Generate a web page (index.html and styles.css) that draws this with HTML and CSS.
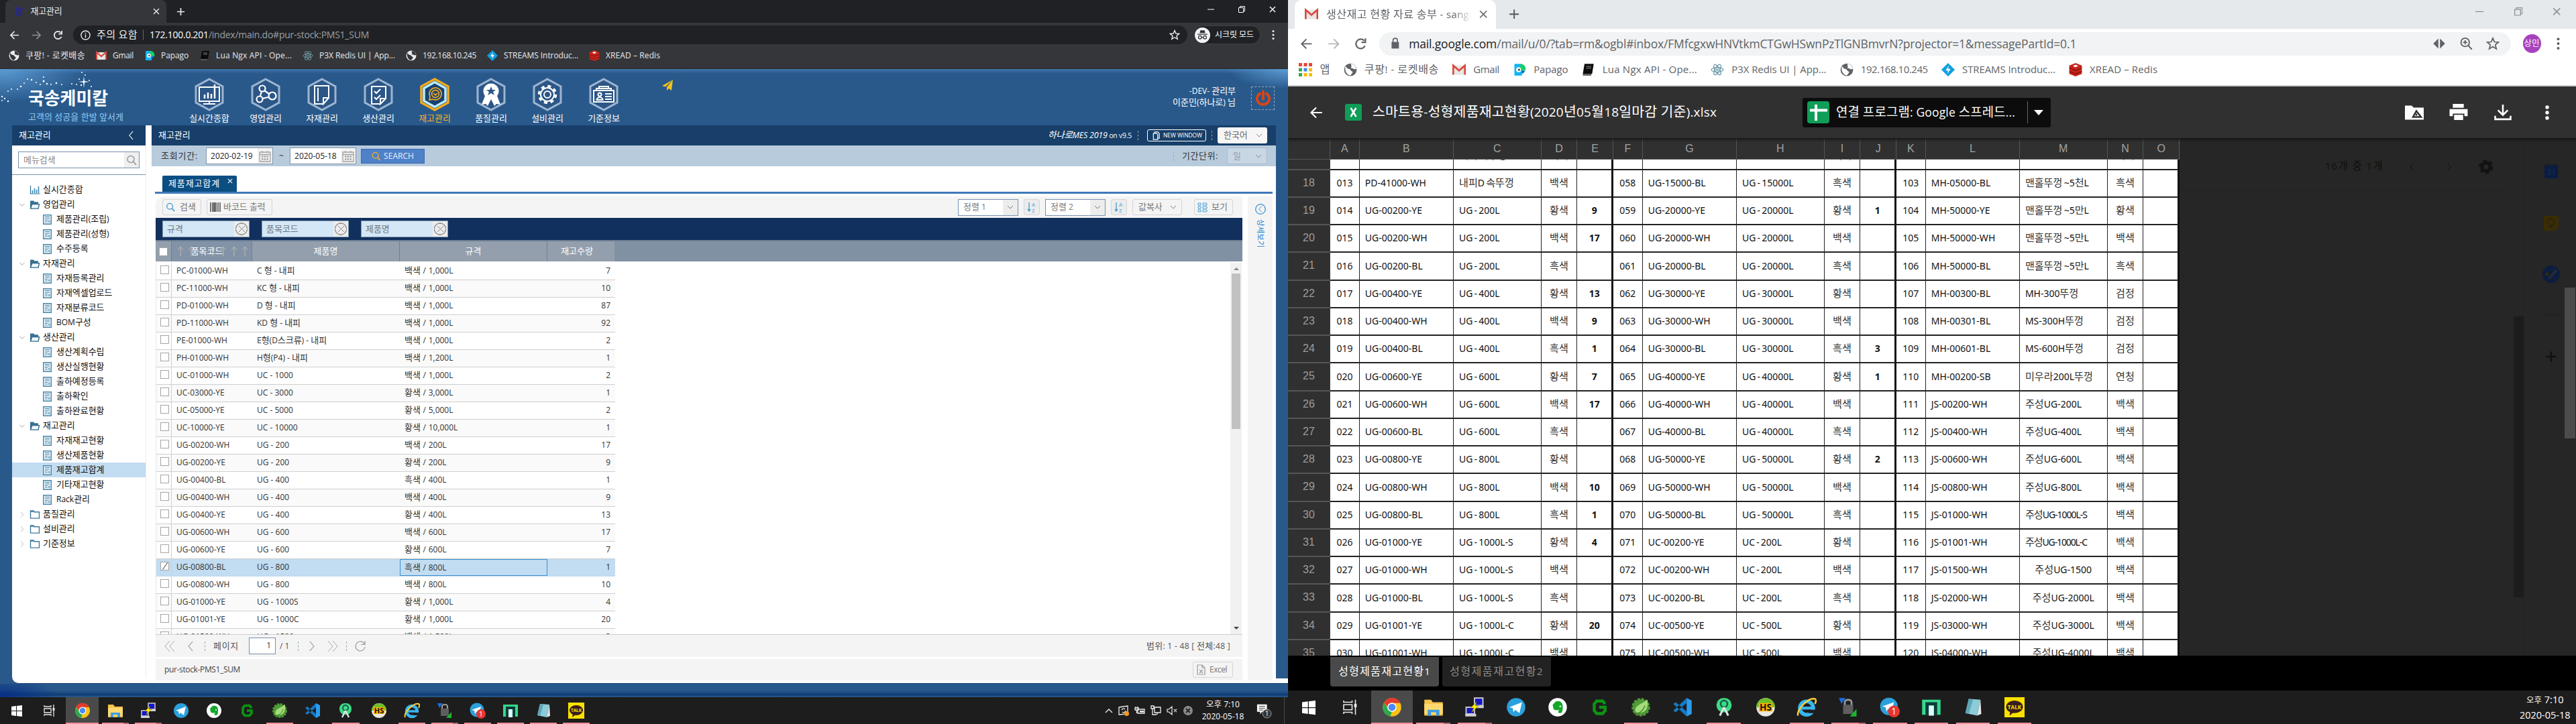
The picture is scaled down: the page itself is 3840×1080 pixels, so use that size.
FILE: index.html
```html
<!DOCTYPE html>
<html lang="ko">
<head>
<meta charset="utf-8">
<title>재고관리</title>
<link rel="stylesheet" href="styles.css">
</head>
<body>
<svg class="sprite" xmlns="http://www.w3.org/2000/svg">
  <defs>
    <symbol id="globe" viewBox="0 0 16 16"><circle cx="8" cy="8" r="7.5" fill="currentColor"/><path d="M2 4c2 1 2 3 4 3s2 2 4 3-1 3-2 5C4 14 1 10 2 4zM9 1c-1 2 1 2 0 4s2 1 3 2 2 0 3 0C15 4 12 1 9 1z" fill="var(--cut)"/></symbol>
    <symbol id="gmail" viewBox="0 0 16 16"><path d="M1 3h14v11H1z" fill="#e8e6e6"/><path d="M1 14V3l7 6 7-6v11" fill="none" stroke="#d84a3e" stroke-width="2.2"/></symbol>
    <symbol id="papago" viewBox="0 0 16 16"><path d="M2 1h7a6 6 0 0 1 2 11v3H2z" fill="#11b5f5"/><path d="M9 1a6 6 0 0 1 6 8H9z" fill="#19ce60"/><circle cx="7" cy="8" r="3" fill="#fff"/><circle cx="7.500" cy="8" r="1.200" fill="#234"/><path d="M11 9l4 1-4 3z" fill="#0b5fb8"/></symbol>
    <symbol id="book" viewBox="0 0 16 16"><path d="M4 1h11l-2 12H2z" fill="#0b0b0b"/><path d="M2 13h10v2H2z" fill="#555"/><path d="M6 4h6M6 6h6" stroke="#777"/></symbol>
    <symbol id="atom" viewBox="0 0 16 16" fill="none" stroke="#6a96a3"><ellipse cx="8" cy="8" rx="7" ry="2.800"/><ellipse cx="8" cy="8" rx="7" ry="2.800" transform="rotate(60 8 8)"/><ellipse cx="8" cy="8" rx="7" ry="2.800" transform="rotate(120 8 8)"/><circle cx="8" cy="8" r="1"/></symbol>
    <symbol id="streams" viewBox="0 0 16 16"><path d="M8 0l8 8-8 8-8-8z" fill="#0f9fe0"/><path d="M9 3L5 9h3l-1 4 4-6H8z" fill="#fff"/></symbol>
    <symbol id="redis" viewBox="0 0 16 16"><path d="M8 0l7.500 3v10L8 16 .5 13V3z" fill="#c6241c"/><path d="M.5 6L8 9l7.500-3M.5 10L8 13l7.500-3" stroke="#7f120d" fill="none"/><path d="M5 3l4-1 2 2-4 1z" fill="#fff"/></symbol>
    <symbol id="apps" viewBox="0 0 16 16"><g fill="#e94335"><path d="M0 0h4v4H0zM6 0h4v4H6zM12 0h4v4h-4z"/></g><path d="M0 6h4v4H0z" fill="#34a853"/><path d="M6 6h4v4H6z" fill="#4285f4"/><path d="M12 6h4v4h-4zM12 12h4v4h-4zM6 12h4v4H6z" fill="#fbbc05"/><path d="M0 12h4v4H0z" fill="#34a853"/></symbol>
    <symbol id="star" viewBox="0 0 16 16"><path d="M8 1.500l1.900 4.500 4.800.4-3.700 3.100 1.200 4.800L8 11.700l-4.200 2.600L5 9.500 1.300 6.400 6.100 6z" fill="none" stroke="currentColor" stroke-width="1.400"/></symbol>
    <symbol id="back" viewBox="0 0 16 16"><path d="M15 8H2M8 2L2 8l6 6" fill="none" stroke="currentColor" stroke-width="1.700"/></symbol>
    <symbol id="fwd" viewBox="0 0 16 16"><path d="M1 8h13M8 2l6 6-6 6" fill="none" stroke="currentColor" stroke-width="1.700"/></symbol>
    <symbol id="reload" viewBox="0 0 16 16"><path d="M13.500 10.500A6 6 0 1 1 12.500 4M14 1v5H9" fill="none" stroke="currentColor" stroke-width="1.900"/></symbol>
    <symbol id="dots" viewBox="0 0 4 16"><g fill="currentColor"><circle cx="2" cy="2.500" r="1.600"/><circle cx="2" cy="8" r="1.600"/><circle cx="2" cy="13.500" r="1.600"/></g></symbol>
    <symbol id="plus" viewBox="0 0 14 14"><path d="M7 1v12M1 7h12" stroke="currentColor" stroke-width="1.800"/></symbol>
    <symbol id="cross" viewBox="0 0 10 10"><path d="M1 1l8 8M9 1L1 9" stroke="currentColor" stroke-width="1.400"/></symbol>
    <symbol id="min" viewBox="0 0 10 10"><path d="M0 5h10" stroke="currentColor"/></symbol>
    <symbol id="restore" viewBox="0 0 10 10"><path d="M.5 2.500h7v7h-7zM2.500 2.500v-2h7v7h-2" fill="none" stroke="currentColor"/></symbol>
    <symbol id="chev-d" viewBox="0 0 10 10"><path d="M1 3l4 4 4-4" fill="none" stroke="currentColor"/></symbol>
    <symbol id="chev-r" viewBox="0 0 10 16"><path d="M2 1l6 7-6 7" fill="none" stroke="currentColor" stroke-width="1.200"/></symbol>
    <symbol id="chev-l" viewBox="0 0 10 16"><path d="M8 1L2 8l6 7" fill="none" stroke="currentColor" stroke-width="1.200"/></symbol>
    <symbol id="lens" viewBox="0 0 16 16"><circle cx="7" cy="6.500" r="5" fill="none" stroke="currentColor" stroke-width="1.500"/><path d="M10.500 10l4.500 5" stroke="currentColor" stroke-width="1.800"/></symbol>
    <symbol id="cal" viewBox="0 0 18 18"><path d="M1 3h16v14H1zM1 6.500h16M5 1v3M13 1v3" fill="none" stroke="#a3a3a3" stroke-width="1.300"/><path d="M4 9.500h10M4 13.500h10" stroke="#a3a3a3" stroke-width="2.500" stroke-dasharray="2.500 1.200"/></symbol>
    <symbol id="az" viewBox="0 0 16 18"><path d="M4 2v13M2 12l2 3 2-3" stroke="#4a9fd6" fill="none" stroke-width="1.400"/><text x="8" y="8" font-size="8" fill="#4a9fd6">A</text><text x="8" y="17" font-size="8" fill="#4a9fd6">Z</text></symbol>
    <symbol id="doc" viewBox="0 0 13 15"><path d="M.7.7h11.600v13.600H.7z" fill="#eaf4fa" stroke="#4a86a8" stroke-width="1.400"/><path d="M3 3.500h7M3 6h7M3 8.500h4M3 11h4" stroke="#4a86a8"/><path d="M8 8.500h2.500V12H8z" fill="#7fb0ca"/></symbol>
    <symbol id="folder-o" viewBox="0 0 16 14"><path d="M1 12V1h5l1 2h6v3" fill="#3c7393" stroke="#2f6a8c"/><path d="M3.500 6H15l-1.500 7H1z" fill="#eef7fc" stroke="#2f6a8c" stroke-width="1.500"/></symbol>
    <symbol id="folder" viewBox="0 0 16 14"><path d="M1 13V1h5l1 2h8v10z" fill="#fff" stroke="#3c7ba0" stroke-width="1.500"/><path d="M1 1h5l1 2H1z" fill="#3c7ba0"/></symbol>
    <symbol id="chart" viewBox="0 0 15 13"><path d="M1 0v12h14" fill="none" stroke="#2e6c90" stroke-width="1.200"/><path d="M4 11V7M7 11V4M10 11V6M13 11V1" stroke="#3a8bb8" stroke-width="1.600"/></symbol>
    <symbol id="hex" viewBox="0 0 46 50"><path d="M23 2l20 11v24L23 48 3 37V13z" fill="#2b5687" stroke="#9db5d0" stroke-width="3"/></symbol>
    <symbol id="hex-on" viewBox="0 0 46 50"><path d="M23 2l20 11v24L23 48 3 37V13z" fill="#17426f" stroke="#f5ab1c" stroke-width="3.500"/><path d="M23 6.500l16 9v19l-16 9-16-9v-19z" fill="none" stroke="#b9ecff" stroke-width="3.500"/></symbol>

    <symbol id="t-win" viewBox="0 0 24 24"><path d="M4 6l7-1v7H4zM12 5l8-1v8h-8zM4 13h7v7l-7-1zM12 13h8v8l-8-1z" fill="#fff"/></symbol>
    <symbol id="t-view" viewBox="0 0 24 24"><path d="M4 9h10v6H4zM4 4v2h10V4M4 20v-2h10v2M18 3v18" fill="none" stroke="#e8e8e8" stroke-width="1.300"/><path d="M16.500 8h3v4h-3z" fill="#e8e8e8"/></symbol>
    <symbol id="t-chrome" viewBox="0 0 24 24"><circle cx="12" cy="12" r="11" fill="#fbc116"/><path d="M2.500 6.500A11 11 0 0 1 22 7H12z" fill="#e33b2e"/><path d="M2.500 6.500L7.500 14 12 17l-2 6A11 11 0 0 1 2.500 6.500z" fill="#2da94f"/><path d="M2.500 6.500A11 11 0 0 1 12 1v6a5 5 0 0 0-5 5z" fill="#e33b2e"/><circle cx="12" cy="12" r="5.500" fill="#fff"/><circle cx="12" cy="12" r="4.300" fill="#4a8af4"/></symbol>
    <symbol id="t-explorer" viewBox="0 0 24 24"><path d="M1 3h8l2 3h12v16H1z" fill="#f5c24b"/><path d="M1 8h22v12H1z" fill="#ffd970"/><path d="M5 22v-7h14v7h-4v-4H9v4z" fill="#3f9de0"/></symbol>
    <symbol id="t-putty" viewBox="0 0 24 24"><path d="M12 1h10v9H12zM2 12h10v8H2z" fill="#1414c8" stroke="#ccc" stroke-width="1.500"/><path d="M10 10h13v3H11zM1 20h13v3H1z" fill="#d0d0d0"/><path d="M15 5l-8 8h4l-3 6 9-9h-4z" fill="#ffef00" stroke="#333" stroke-width=".4"/></symbol>
    <symbol id="t-tele" viewBox="0 0 24 24"><circle cx="12" cy="12" r="11" fill="#2ba0dc"/><path d="M4 12l15-6-3 13-5-4-2 3-1-5z" fill="#fff"/></symbol>
    <symbol id="t-ever" viewBox="0 0 24 24"><circle cx="12" cy="12" r="11" fill="#fff"/><path d="M6 9l4-4c5-1 8 1 8 6 0 4 0 8-3 8-4 0-2-3-1-4-3 1-5 1-7-1z" fill="#13a82b"/><circle cx="15" cy="11" r="1" fill="#fff"/></symbol>
    <symbol id="t-g" viewBox="0 0 24 24"><path d="M19 8l-3-3.500H9L6 8v8l3 3.500h7l3-3.500v-4h-7" fill="none" stroke="#0b9413" stroke-width="3.600"/></symbol>
    <symbol id="t-spring" viewBox="0 0 24 24"><circle cx="12" cy="12" r="9.500" fill="#4f9b38" stroke="#4f9b38" stroke-width="3" stroke-dasharray="3 1.500"/><path d="M20 3c1 12-3 17-14 15C3 10 12 9 20 3z" fill="#a6dc7b"/><path d="M4 20c6 0 11-4 13-10" stroke="#3c7c28" fill="none"/></symbol>
    <symbol id="t-code" viewBox="0 0 24 24"><path d="M17 1l6 3v16l-6 3z" fill="#2a9df0"/><path d="M17 1v6L4 18l-3-2zM17 23v-6L4 6 1 8z" fill="#1479c4"/></symbol>
    <symbol id="t-android" viewBox="0 0 24 24"><rect x="3" y="1" width="18" height="17" rx="8" fill="#3ddc84"/><circle cx="12" cy="8" r="4" fill="none" stroke="#1a5c4d" stroke-width="2"/><path d="M12 12L7 22M12 12l5 10" stroke="#d9e6e0" stroke-width="2.400"/></symbol>
    <symbol id="t-hs" viewBox="0 0 24 24"><circle cx="12" cy="12" r="11" fill="#e8e8df"/><path d="M1 12a11 11 0 0 1 22 0z" fill="#6fbf2a"/><path d="M4 7h16v10H4z" fill="#ffb400"/><text x="12" y="16" font-size="11" font-weight="700" text-anchor="middle" fill="#111">HS</text></symbol>
    <symbol id="t-ie" viewBox="0 0 24 24"><circle cx="12" cy="13" r="8" fill="none" stroke="#38b6f1" stroke-width="4.500"/><path d="M6 13h14" stroke="#38b6f1" stroke-width="3.500"/><path d="M14 15h9v4h-9z" fill="#1e1d1d"/><path d="M2 22C-1 16 14 0 22 2c2 1 1 4 0 6" fill="none" stroke="#f7cf3c" stroke-width="2"/></symbol>
    <symbol id="t-lock" viewBox="0 0 24 24"><path d="M8 10V6c0-4 8-4 8 0v4" fill="none" stroke="#9a9a9a" stroke-width="2.200"/><rect x="6" y="9" width="12" height="11" fill="#5e5e5e"/><path d="M1 1h8L4 8z" fill="#1b6fe0"/><path d="M22 14v9h-8z" fill="#18b82c"/></symbol>
    <symbol id="t-badge" viewBox="0 0 24 24"><circle cx="11" cy="11" r="10.500" fill="#2ba0dc"/><path d="M3 11l14-5-3 12-4-4-2 3-1-5z" fill="#fff"/><circle cx="17" cy="17" r="7" fill="#e8352e"/><text x="17" y="21" font-size="11" text-anchor="middle" fill="#fff">1</text></symbol>
    <symbol id="t-n" viewBox="0 0 24 24"><path d="M1 3h22v18H1z" fill="#36d98b"/><path d="M5 6h14v15h-4V10H9v11H5z" fill="#0c3c3a"/><path d="M9 10h6v12H9z" fill="#dff"/></symbol>
    <symbol id="t-note" viewBox="0 0 24 24"><path d="M7 2l14 1-4 19-14-3z" fill="#8ccbd8"/><path d="M21 3l1 17-5 2z" fill="#e6e6e6"/><path d="M7 2l5 1-5 17-4-1z" fill="#5ea5b8"/></symbol>
    <symbol id="t-talk" viewBox="0 0 24 24"><path d="M0 0h24v24H0z" fill="#fae100"/><ellipse cx="12" cy="11.500" rx="10" ry="7.500" fill="#3a1d1d"/><path d="M7 16l-1 6 5-4z" fill="#3a1d1d"/><text x="12" y="14" font-size="6.500" font-weight="700" text-anchor="middle" fill="#fae100">TALK</text></symbol>
  </defs>
</svg>

<div class="desktop">

<!-- ===== Left monitor: MES ===== -->
<section class="screen dark">
  <div class="browser">
    <div class="tabstrip">
      <div class="tab"><svg class="fav" viewBox="0 0 16 16"><path d="M8 0v4M2 5h12M8 7a3.500 3.500 0 1 0 .01 0" fill="none" stroke="#27278c" stroke-width="2.500"/></svg><span class="tab-t" data-w="47">재고관리</span><svg class="tab-x"><use href="#cross"/></svg></div>
      <svg class="newtab"><use href="#plus"/></svg>
      <div class="winbtns"><svg><use href="#min"/></svg><svg><use href="#restore"/></svg><svg><use href="#cross"/></svg></div>
    </div>
    <div class="toolbar">
      <svg class="nav1"><use href="#back"/></svg><svg class="nav2"><use href="#fwd"/></svg><svg class="nav3"><use href="#reload"/></svg>
      <div class="address">
        <svg class="info" viewBox="0 0 16 16"><circle cx="8" cy="8" r="7" fill="none" stroke="currentColor" stroke-width="1.500"/><path d="M8 7v5M8 4v1.600" stroke="currentColor" stroke-width="1.600"/></svg>
        <span class="warn" data-w="61">주의 요함</span><i class="bar"></i>
        <span class="url" data-w="327"><b>172.100.0.201</b>/index/main.do#pur-stock:PMS1_SUM</span>
        <svg class="addr-i push"><use href="#star"/></svg>
      </div>
      <div class="incog"><svg viewBox="0 0 22 22"><circle cx="11" cy="11" r="11" fill="#f1f3f4"/><path d="M7 8l1-4h6l1 4zM4 9h14v1.300H4z" fill="#303134"/><g fill="none" stroke="#303134" stroke-width="1.200"><circle cx="7.500" cy="14" r="2.200"/><circle cx="14.500" cy="14" r="2.200"/><path d="M9.700 14h2.600"/></g></svg><span data-w="58">시크릿 모드</span></div>
      <svg class="menu"><use href="#dots"/></svg>
    </div>
    <div class="bookmarks" data-bookmarks></div>
  </div>

  <div class="mes">
    <header class="mes-head">
      <div class="logo">
        <svg class="stars" viewBox="0 0 150 84"><g fill="#fff"><path d="M125 11l1 7 7 1-7 1-1 8-1-8-7-1 7-1z"/><circle cx="122" cy="5" r="1"/><circle cx="127" cy="9" r="1"/><circle cx="118" cy="15" r="1"/><circle cx="133" cy="17" r="1"/><circle cx="136" cy="26" r="1"/><circle cx="121" cy="24" r="1.200"/><circle cx="107" cy="22" r="1"/><circle cx="114" cy="23" r="1"/><circle cx="92" cy="23" r="1"/><circle cx="84" cy="21" r="1.300"/><circle cx="76" cy="23" r="1"/><circle cx="70" cy="22" r="1.300"/><circle cx="65" cy="18" r="1.500"/><circle cx="60" cy="23" r="1"/><circle cx="65" cy="12" r="1"/><circle cx="54" cy="20" r="1"/><circle cx="47" cy="16" r="1.200"/><circle cx="41" cy="15" r="1"/><circle cx="36" cy="21" r="1"/><circle cx="31" cy="26" r="1.300"/><circle cx="26" cy="30" r="1"/><circle cx="17" cy="30" r="1"/><circle cx="12" cy="33" r="1"/><circle cx="3" cy="41" r="1.200"/><circle cx="7" cy="44" r="1.200"/><circle cx="12" cy="48" r="1.200"/><circle cx="3" cy="47" r="1"/></g></svg>
        <div class="brand" data-w="119">국송케미칼</div>
        <div class="slogan" data-w="142">고객의 성공을 한발 앞서게</div>
      </div>
      <nav class="mods">
        <a><svg viewBox="0 0 46 50"><use href="#hex"/><g fill="none" stroke="#fff" stroke-width="2"><path d="M31 13v4M8 14h30v21H8zM23 35v4M14 39h18"/><path d="M16 31v-6M21 31v-9M26 31v-7M31 31V10" stroke-width="2.500"/></g></svg>실시간종합</a>
        <a><svg viewBox="0 0 46 50"><use href="#hex"/><g fill="none" stroke="#fff" stroke-width="2.200"><circle cx="18" cy="16" r="4.500"/><circle cx="14" cy="32" r="4.500"/><circle cx="33" cy="27" r="5.500"/><path d="M17 20l-2 7M21 19l7 5M18 31l9-2"/></g></svg>영업관리</a>
        <a><svg viewBox="0 0 46 50"><use href="#hex"/><path d="M25 39H12V12h21v18l-8 9v-9h8M17 17v18" fill="none" stroke="#fff" stroke-width="2"/><path d="M17 15v20" stroke="#fff" stroke-width="2" stroke-dasharray="2 3"/></svg>자재관리</a>
        <a><svg viewBox="0 0 46 50"><use href="#hex"/><path d="M26 39H13V13h21v18l-8 8v-8h8M17 20l3 3 6-6M17 29l3 3 6-6" fill="none" stroke="#fff" stroke-width="2"/></svg>생산관리</a>
        <a class="on"><svg viewBox="0 0 46 50"><use href="#hex-on"/><g fill="none" stroke="#eaa527" stroke-width="1.800"><path d="M15 33l1-5a9 9 0 1 1 4 4z"/><circle cx="24" cy="24" r="5.500"/><path d="M21 23l3 3 3-3"/></g></svg>재고관리</a>
        <a><svg viewBox="0 0 46 50"><use href="#hex"/><path d="M14 27l-5 13 6-1 3 3 5-10 5 10 3-3 6 1-5-13z" fill="#fff"/><circle cx="23" cy="20" r="11.500" fill="#fff"/><path d="M23 13l2 5h5l-4 3 2 5-5-3-5 3 2-5-4-3h5z" fill="#2b5687"/></svg>품질관리</a>
        <a><svg viewBox="0 0 46 50"><use href="#hex"/><g fill="none" stroke="#fff"><circle cx="23" cy="25" r="12.500" stroke-width="3.500" stroke-dasharray="5 4.800"/><circle cx="23" cy="25" r="10" stroke-width="2"/><circle cx="23" cy="25" r="5" stroke-width="2"/></g></svg>설비관리</a>
        <a><svg viewBox="0 0 46 50"><use href="#hex"/><g fill="none" stroke="#fff" stroke-width="2"><path d="M8 19h30v17H8zM12 19v-3h22v3M16 15v-2h14v2"/><circle cx="17" cy="25" r="2.500"/><path d="M12.500 33c0-5 9-5 9 0zM25 24h10M25 28h10M25 32h10"/></g></svg>기준정보</a>
      </nav>
      <svg class="plane" viewBox="0 0 17 16"><path d="M16 0L0 9l5 1.500zM16 0L7 11v5l3-3 4 3z" fill="#f5c315"/></svg>
      <div class="who"><span>-DEV- 관리부</span><span data-w="94">이준민(하나로) 님</span></div>
      <div class="power"><svg viewBox="0 0 24 26"><path d="M7 5a10 9.500 0 1 0 10 0M12 1v13" fill="none" stroke="#e04410" stroke-width="4" stroke-linecap="round"/></svg></div>
    </header>

    <div class="mes-body">
      <aside class="side">
        <div class="side-h"><span>재고관리</span><svg><use href="#chev-l"/></svg></div>
        <div class="side-s"><div class="find"><span>메뉴검색</span><i><svg><use href="#lens"/></svg></i></div></div>
        <ul class="tree" id="tree"></ul>
      </aside>
      <main class="main">
        <div class="bar1"><span>재고관리</span>
          <span class="ver push" data-w="125"><em>하나로MES 2019</em> on v9.5</span><i class="dash"></i>
          <span class="neww"><svg viewBox="0 0 11 14"><path d="M3 3V1h5l2.500 2.500V11H8M1 3h5l2 2v8H1z" fill="none" stroke="#fff" stroke-width="1.300"/></svg><span data-w="58">NEW WINDOW</span></span><i class="dash d2"></i>
          <span class="lang">한국어<svg><use href="#chev-d"/></svg></span>
        </div>
        <div class="bar2"><span data-w="55">조회기간:</span>
          <span class="date f1">2020-02-19<i><svg><use href="#cal"/></svg></i></span><span class="tilde">~</span>
          <span class="date f2">2020-05-18<i><svg><use href="#cal"/></svg></i></span>
          <span class="go"><svg><use href="#lens"/></svg><span data-w="45">SEARCH</span></span>
          <i class="dash push d3"></i><span data-w="54">기간단위:</span><span class="unit">일<svg><use href="#chev-d"/></svg></span>
        </div>
        <div class="tabs"><div class="mtab"><span data-w="77">제품재고합계</span><svg><use href="#cross"/></svg></div></div>
        <div class="work">
          <div class="panel">
            <div class="gbar">
              <span class="btn b1"><svg class="bl"><use href="#lens"/></svg>검색</span>
              <span class="btn b2"><svg viewBox="0 0 16 14"><path d="M1 0v14M4 0v14M9 0v14M12 0v14M15 0v14" stroke="#555" stroke-width="1.600"/><path d="M6.500 0v14" stroke="#555" stroke-width="2.500"/></svg>바코드 출력</span>
              <span class="combo push">정렬 1<i><svg><use href="#chev-d"/></svg></i></span><span class="btn sort"><svg><use href="#az"/></svg></span>
              <span class="combo">정렬 2<i><svg><use href="#chev-d"/></svg></i></span><span class="btn sort"><svg><use href="#az"/></svg></span>
              <span class="btn copy">값복사<svg><use href="#chev-d"/></svg></span>
              <span class="btn view"><svg viewBox="0 0 16 14" fill="none" stroke="#4a9fd6"><path d="M1 1h4v3H1zM8 1h6v3H8zM1 6h4v3H1zM8 6h6v3H8zM1 11h4v3H1zM8 11h6v3H8z"/></svg>보기</span>
            </div>
            <div class="filters"><span>규격<i></i></span><span>품목코드<i></i></span><span>제품명<i></i></span></div>
            <div class="ghead"><span class="c0"><b class="cb"></b></span><span class="c1"><svg class="asc" viewBox="0 0 108 16"><path d="M5 15V1M1 6l4-5 4 5M21 15V1M17 6l4-5 4 5M37 15V1M53 15V1M49 6l4-5 4 5M69 15V1M65 6l4-5 4 5M85 15V1M81 6l4-5 4 5M101 15V1M97 6l4-5 4 5" fill="none" stroke="#bdb9b3"/></svg><b>품목코드</b></span><span class="c2">제품명</span><span class="c3">규격</span><span class="c4">재고수량</span></div>
            <div class="gbody"><div class="rows" id="rows"></div><div class="vscroll"><i class="up"></i><b></b><i class="dn"></i></div></div>
            <div class="pager">
              <svg class="p1" viewBox="0 0 16 16"><path d="M8 0L1 8l7 8M15 0L8 8l7 8" fill="none" stroke="#aaa"/></svg>
              <svg class="p2"><use href="#chev-l"/></svg><i class="dash"></i><span class="pg" data-w="38">페이지</span><span class="num">1</span><span class="of">/ 1</span><i class="dash"></i>
              <svg class="p3"><use href="#chev-r"/></svg>
              <svg class="p4" viewBox="0 0 16 16"><path d="M1 0l7 8-7 8M8 0l7 8-7 8" fill="none" stroke="#aaa"/></svg><i class="dash"></i>
              <svg class="p5" viewBox="0 0 16 16"><path d="M15 9a7 7 0 1 1-2-6l2 2V0M15 5.500H9" fill="none" stroke="#999" stroke-width="1.200"/></svg>
              <span class="range push" data-w="125">범위: 1 - 48 [ 전체:48 ]</span>
            </div>
            <div class="status"><span data-w="113">pur-stock-PMS1_SUM</span><span class="btn excel push"><svg viewBox="0 0 13 16"><path d="M1 1h7l4 4v10H1zM8 1v4h4M4 8l5 5M9 8l-5 5" fill="none" stroke="#999" stroke-width="1.200"/></svg><span data-w="26">Excel</span></span></div>
          </div>
          <div class="strip"><svg viewBox="0 0 16 16"><circle cx="8" cy="8" r="7.300" fill="none" stroke="#3a93d8" stroke-width="1.300"/><path d="M10 3.500L5.500 8l4.500 4.500" fill="none" stroke="#3a93d8"/></svg><span>상세보기</span></div>
        </div>
      </main>
      <div class="gutter"></div>
    </div>
    <footer class="mes-foot"></footer>
  </div>

  <div class="taskbar" data-taskbar>
    <div class="tray">
      <svg viewBox="0 0 12 12"><path d="M1 9l5-5 5 5" fill="none" stroke="#eee" stroke-width="1.300"/></svg>
      <svg viewBox="0 0 16 16"><path d="M1 3l13-2v12l-13 1zM5 7a3 3 0 0 1 5-1M11 8a3 3 0 0 1-5 2" fill="none" stroke="#eee" stroke-width="1.300"/><circle cx="12.500" cy="12.500" r="3.500" fill="#f59a1b"/></svg>
      <svg viewBox="0 0 16 16"><path d="M5 6h10v6H5zM1 4h5v3H1zM2 2v2M5 2v2M3.500 7v5" fill="none" stroke="#eee" stroke-width="1.300"/><path d="M8 8h6v2.500H8z" fill="#eee"/></svg>
      <svg viewBox="0 0 16 16"><path d="M6 3h9v8H6zM1 1h4v4H1zM3 5v9h6M10 11v3" fill="none" stroke="#eee" stroke-width="1.300"/></svg>
      <svg viewBox="0 0 16 16"><path d="M1 6h2.500L8 2v12l-4.500-4H1zM11 6l4 4M15 6l-4 4" fill="none" stroke="#eee" stroke-width="1.200"/></svg>
      <svg viewBox="0 0 16 16"><circle cx="8" cy="8" r="7" fill="#8a8a8a"/><path d="M5 5l6 6M11 5l-6 6" stroke="#222" stroke-width="1.800"/></svg>
    </div>
    <div class="clock"><span>오후 7:10</span><span>2020-05-18</span></div>
    <div class="notif"><svg viewBox="0 0 24 24"><path d="M1 2h16v12H9l-3 4v-4H1z" fill="#fff"/><path d="M4 5h10M4 8h10M4 11h7" stroke="#222"/><circle cx="17" cy="17" r="7" fill="#333" stroke="#aaa"/><text x="17" y="21" font-size="11" text-anchor="middle" fill="#fff">1</text></svg></div>
  </div>
</section>

<!-- ===== Right monitor: mail attachment viewer ===== -->
<section class="screen light">
  <div class="browser large">
    <div class="tabstrip">
      <div class="tab"><svg class="fav"><use href="#gmail"/></svg><span class="tab-t wide"><span data-w="182">생산재고 현황 자료 송부 - sangm</span></span><svg class="tab-x"><use href="#cross"/></svg></div>
      <svg class="newtab"><use href="#plus"/></svg>
      <div class="winbtns"><svg><use href="#min"/></svg><svg><use href="#restore"/></svg><svg><use href="#cross"/></svg></div>
    </div>
    <div class="toolbar">
      <svg class="nav1"><use href="#back"/></svg><svg class="nav2"><use href="#fwd"/></svg><svg class="nav3"><use href="#reload"/></svg>
      <div class="address">
        <svg class="lock" viewBox="0 0 12 16"><path d="M1 6h10v9H1z" fill="currentColor"/><path d="M3 7V4c0-4 6-4 6 0v3" fill="none" stroke="currentColor" stroke-width="1.500"/></svg>
        <span class="url" data-w="796"><b>mail.google.com</b>/mail/u/0/?tab=rm&amp;ogbl#inbox/FMfcgxwHNVtkmCTGwHSwnPzTlGNBmvrN?projector=1&amp;messagePartId=0.1</span>
        <svg class="addr-i push" viewBox="0 0 16 16"><path d="M7 2v12L1 8zM9 2v12l6-6z" fill="currentColor"/></svg>
        <svg class="addr-i" viewBox="0 0 16 16"><circle cx="7" cy="6.500" r="5" fill="none" stroke="currentColor" stroke-width="1.500"/><path d="M10.500 10l4.500 5M7 4v5M4.500 6.500h5" stroke="currentColor" stroke-width="1.500"/></svg>
        <svg class="addr-i"><use href="#star"/></svg>
      </div>
      <span class="avatar"><span>상민</span></span>
      <svg class="menu"><use href="#dots"/></svg>
    </div>
    <div class="bookmarks" data-bookmarks="apps"></div>
  </div>

  <div class="viewer">
    <div class="vbar">
      <svg class="vback"><use href="#back"/></svg>
      <svg class="vx" viewBox="0 0 25 25"><rect width="25" height="25" rx="3" fill="#0f9d58"/><path d="M8.500 6l8 13M16.500 6l-8 13" stroke="#fff" stroke-width="2.500"/></svg>
      <span class="vtitle" data-w="513">스마트용-성형제품재고현황(2020년05월18일마감 기준).xlsx</span>
      <div class="open"><svg class="gs" viewBox="0 0 33 33"><rect width="33" height="33" rx="4" fill="#0f9d58"/><path d="M13 5v24M4 13.500h26" stroke="#fff" stroke-width="4"/></svg><span data-w="267">연결 프로그램: Google 스프레드...</span><i></i><b></b></div>
      <svg class="va push" viewBox="0 0 28 24"><path d="M0 2h10l3 3h15v18H0z" fill="#fff"/><path d="M17 10l-5 9h12zM17 14v3" fill="none" stroke="#303030" stroke-width="2.500"/></svg>
      <svg class="va" viewBox="0 0 28 26"><path d="M5 0h17v6H5zM0 8h28v11h-5v-4H5v4H0zM7 17h14v8H7z" fill="#fff"/></svg>
      <svg class="va" viewBox="0 0 24 24"><path d="M12 1v14M5 9l7 7 7-7M1 17v5h22v-5" fill="none" stroke="#fff" stroke-width="2.500"/></svg>
      <svg class="vm" viewBox="0 0 6 22"><g fill="#fff"><circle cx="3" cy="3" r="2.700"/><circle cx="3" cy="11" r="2.700"/><circle cx="3" cy="19" r="2.700"/></g></svg>
    </div>
    <div class="vmain">
      <div class="sheet"><div class="shead" id="shead"></div><div class="sclip"><div class="sbody" id="sbody"></div></div></div>
      <div class="dim">
        <div class="inbox"><span data-w="87">16개 중 1개</span><svg class="ia"><use href="#chev-l"/></svg><svg class="ib"><use href="#chev-r"/></svg>
          <svg class="gear" viewBox="0 0 22 22"><circle cx="11" cy="11" r="6" fill="none" stroke="#131313" stroke-width="5"/><circle cx="11" cy="11" r="9" fill="none" stroke="#131313" stroke-width="3.500" stroke-dasharray="5.200 4.220"/></svg></div>
        <div class="dscroll"></div>
      </div>
      <div class="rail">
        <svg class="r1" viewBox="0 0 22 22"><path d="M1 0h20v4H1z" fill="#1b1e25"/><rect x="1" y="2" width="20" height="19" rx="2" fill="#0a1c42"/><text x="11" y="16" font-size="12" text-anchor="middle" fill="#1f2d49">31</text></svg>
        <svg class="r2" viewBox="0 0 22 22"><path d="M0 1a1 1 0 0 1 1-1h20a1 1 0 0 1 1 1v15l-6 6H1a1 1 0 0 1-1-1z" fill="#3b2c02"/><circle cx="11" cy="9" r="5" fill="none" stroke="#262218" stroke-width="1.500"/><path d="M8.500 15h5v3h-5z" fill="#262218"/></svg>
        <svg class="r3" viewBox="0 0 26 26"><circle cx="13" cy="13" r="13" fill="#0c1d3e"/><path d="M11 18l9-10" stroke="#262b33" stroke-width="4" stroke-linecap="round"/><circle cx="7" cy="13" r="2.600" fill="#332a08"/></svg>
        <i></i>
        <svg class="r4"><use href="#plus"/></svg>
      </div>
      <div class="rscroll"><b></b></div>
    </div>
    <div class="stabs"><span class="on"><span data-w="138">성형제품재고현황1</span></span><span><span data-w="140">성형제품재고현황2</span></span></div>
  </div>

  <div class="taskbar large" data-taskbar>
    <div class="clock"><span>오후 7:10</span><span>2020-05-18</span></div>
  </div>
</section>
</div>
<script src="app.js"></script>
</body>
</html>
```

FILE: styles.css
```css
* { box-sizing: border-box; }
html, body { margin: 0; padding: 0; }
body { width: 3840px; height: 1080px; overflow: hidden; background: #000; font-family: "Open Sans", "Noto Sans CJK KR", sans-serif; font-size: 12px; line-height: 1.3; }
svg { display: block; flex: none; overflow: visible; }
i, em { font-style: normal; }
b { font-weight: inherit; }
ul { margin: 0; padding: 0; list-style: none; }
.sprite { position: absolute; width: 0; height: 0; }
.ko { font-size: 1.08em; line-height: 1; }
.push { margin-left: auto !important; }
[data-w] { white-space: nowrap; display: inline-block; }

.desktop { display: flex; }
.screen { width: 1920px; height: 1080px; display: flex; flex-direction: column; overflow: hidden; }

/* ---- browser chrome, sized in em so both monitor scales share it ---- */
.browser { font-size: 10px; flex: none; height: 10.3em; overflow: hidden; }
.browser.large { font-size: 12.5px; height: 129px; }
.dark .browser { --strip: #202124; --bar: #35363a; --field: #202124; --ink: #e8eaed; --cut: #35363a; --dim: #8b8d90; --url: #fff; --path: #9aa0a6; border-bottom: 1px solid #28292b; }
.light .browser { --strip: #e5e9ec; --bar: #fff; --field: #f1f3f4; --ink: #5f6368; --cut: #fff; --dim: #b5b7ba; --url: #202124; --path: #5f6368; border-bottom: 2px solid #d8d9dc; }
.browser { color: var(--ink); background: var(--bar); }
.tabstrip { height: 3.4em; background: var(--strip); display: flex; align-items: center; padding-left: .8em; }
.tab { width: 24em; height: 3.4em; background: var(--bar); border-radius: .8em .8em 0 0; display: flex; align-items: center; padding-left: 1.2em; }
.fav { width: 1.6em; height: 1.6em; }
.tab-t { margin-left: .8em; }
.tab-t, .tab-t > span { font-size: 12px; }
.large .tab-t, .large .tab-t > span { font-size: 15px; }
.tab-t.wide { width: 217px; margin-left: 12px; overflow: hidden; white-space: nowrap; -webkit-mask-image: linear-gradient(90deg, #000 88%, transparent); mask-image: linear-gradient(90deg, #000 88%, transparent); }
.tab-x { width: 1em; height: 1em; margin: 0 1em 0 auto; }
.newtab { width: 1.3em; height: 1.3em; margin-left: 1.5em; }
.winbtns { margin-left: auto; display: flex; gap: 3.6em; padding-right: 1.8em; margin-top: -.6em; }
.winbtns svg { width: 1em; height: 1em; }
.light .winbtns { color: #8b8e92; }
.dark .winbtns { color: #fff; }
.toolbar { height: 3.6em; display: flex; align-items: center; }
.nav1 { width: 1.5em; height: 1.5em; margin-left: 1.4em; }
.nav2 { width: 1.5em; height: 1.5em; margin-left: 1.8em; color: var(--dim); }
.nav3 { width: 1.5em; height: 1.5em; margin-left: 1.7em; }
.address { flex: 1; height: 2.8em; margin-left: 1.5em; background: var(--field); border-radius: 1.4em; display: flex; align-items: center; padding: 0 1.1em; }
.dark .address { margin-right: .9em; }
.light .address { margin-right: 1.4em; padding-right: 1.4em; }
.info { width: 1.5em; height: 1.5em; }
.warn { font-size: 14px; margin-left: 9px; }
.bar { width: 1px; height: 1.6em; background: #5f6368; margin: 0 .9em 0 .8em; }
.lock { width: 1.1em; height: 1.4em; margin-left: .2em; }
.url { font-size: 14px; color: var(--path); }
.url b { color: var(--url); }
.large .url { font-size: 17.5px; margin-left: 14px; }
.addr-i { width: 1.6em; height: 1.6em; margin-left: 1.6em; }
.incog { width: 10em; height: 2.8em; border-radius: 1.4em; border: 1px solid #3e4043; background: #202124; display: flex; align-items: center; padding-left: .1em; color: #fff; }
.incog svg { width: 2.3em; height: 2.3em; }
.incog span { font-size: 12px; }
.incog > span { margin-left: 7px; }
.menu { width: .4em; height: 1.6em; margin: 0 2em 0 1.7em; }
.avatar { width: 27px; height: 28px; border-radius: 50%; background: #a742bd; color: #fff; display: flex; align-items: center; justify-content: center; font-size: 11.5px; }
.light .menu { margin: 0 1.9em 0 1.9em; }
.bookmarks { display: flex; align-items: center; height: 2.6em; padding-left: 1.3em; gap: 1.6em; }
.bookmarks > span { display: flex; align-items: center; gap: .9em; }
.bookmarks svg { width: 1.6em; height: 1.6em; }
.bookmarks [data-w] { font-size: 12px; }
.large .bookmarks [data-w] { font-size: 15px; }

/* ---- MES application ---- */
.mes { flex: none; height: 937px; background: #29598b; color: #333; }
.mes-head { height: 84px; display: flex; background: radial-gradient(ellipse 130px 50px at 0 0, #5b9bd3, transparent), radial-gradient(ellipse 90px 30px at 100% 0, #5b9bd3, transparent), linear-gradient(#4478a8, #3468a0 3px, #29598b 7px); color: #fff; }
.logo { width: 270px; padding: 28px 0 0 42px; position: relative; display: flex; flex-direction: column; align-items: flex-start; }
.stars { position: absolute; left: 0; top: 0; width: 150px; height: 84px; }
.brand { font-size: 24px; font-weight: 700; line-height: 32px; }
.slogan { color: #8fcdf5; line-height: 16px; margin-top: 4px; }
.mods { display: flex; padding-top: 13px; }
.mods a { width: 84px; display: flex; flex-direction: column; align-items: center; gap: 3px; line-height: 16px; }
.mods svg { width: 46px; height: 50px; }
.mods .on { color: #fbb62a; }
.plane { width: 17px; height: 16px; margin: 16px 0 0 45px; }
.who { margin-left: auto; padding-top: 24px; display: flex; flex-direction: column; align-items: flex-end; line-height: 17px; }
.power { width: 35px; height: 35px; margin: 26px 20px 0 23px; border: 1px dashed #9aa9b9; display: flex; align-items: center; justify-content: center; }
.power svg { width: 22px; height: 24px; }
.mes-body { display: flex; height: 833px; margin-left: 18px; background: #fff; border-bottom-left-radius: 10px; border-bottom: 1px solid #1c4470; }
.mes-foot { height: 20px; background: radial-gradient(ellipse 90px 30px at 0 100%, #072f86, transparent), linear-gradient(#29598b 50%, #0c3c75 85%, #29598b 95%); }
.gutter { width: 18px; height: 825px; background: #29598b; }

.side { width: 200px; height: 825px; border-right: 1px solid #ececec; }
.side-h { height: 30px; width: 199px; background: #173f69; color: #fff; display: flex; align-items: center; justify-content: space-between; padding: 0 17px 0 10px; }
.side-h svg { width: 9px; height: 14px; }
.side-s { width: 199px; height: 44px; border-bottom: 1px solid #7792ad; padding: 9px 9px 0; }
.find { height: 25px; border: 1px solid #7792ad; display: flex; align-items: center; justify-content: space-between; padding-left: 7px; color: #868686; }
.find i { background: #efefef; width: 22px; height: 23px; display: flex; align-items: center; justify-content: center; color: #999; }
.find svg { width: 16px; height: 16px; }
.tree { padding-top: 11px; width: 199px; }
.tree li { height: 22px; display: flex; align-items: center; padding-left: 10px; color: #111; white-space: nowrap; }
.tree .arr { width: 10px; height: 9px; color: #999; margin-right: 6px; }
.tree .fo { width: 16px; height: 13px; margin-right: 4px; }
.tree .leaf { padding-left: 46px; }
.tree .dc { width: 13px; height: 15px; margin-right: 7px; }
.tree .sel { background: #c2dcf1; }

.main { width: 1676px; margin-left: 8px; height: 825px; }
.bar1 { height: 30px; background: #173f69; color: #fff; display: flex; align-items: center; padding: 0 13px 0 10px; }
.ver { font-size: 10.5px; }
.ver em { font-style: italic; font-size: 12.500px; }
.dash { width: 0; height: 14px; border-left: 1px dashed #9aa; margin: 0 13px 0 9px; }
.d2 { margin: 0 8px; }
.neww { width: 88px; height: 18px; border: 1px solid #fff; border-radius: 3px; display: flex; align-items: center; gap: 5px; padding-left: 7px; font-size: 8.500px; white-space: nowrap; }
.neww svg { width: 11px; height: 13px; }
.lang { width: 74px; height: 24px; background: #f6f6f6; border-radius: 3px; color: #666; display: flex; align-items: center; justify-content: space-between; padding: 0 7px 0 9px; }
.lang svg, .unit svg { width: 10px; height: 10px; color: #888; }
.bar2 { height: 31px; background: #b8cbdd; display: flex; align-items: center; padding: 0 13px 0 14px; color: #333; }
.date { height: 25px; border: 1px solid #8296aa; background: #fff; display: flex; align-items: center; justify-content: space-between; padding-left: 6px; color: #222; white-space: nowrap; }
.date i { width: 22px; height: 23px; background: #f3f3f3; display: flex; align-items: center; justify-content: center; }
.date svg { width: 18px; height: 18px; }
.f1 { width: 100px; margin-left: 12px; }
.tilde { width: 25px; text-align: center; }
.f2 { width: 99px; }
.go { width: 95px; height: 22px; margin-left: 7px; background: #4f81c9; border: 1px solid #3c69b0; color: #e9f0fa; display: flex; align-items: center; padding-left: 14px; gap: 4px; }
.go svg { width: 15px; height: 14px; color: #f7b422; }
.d3 { margin-right: 12px; }
.unit { width: 60px; height: 25px; margin-left: 13px; border: 1px solid #aabccd; background: #c9d6e3; color: #8b9aab; display: flex; align-items: center; justify-content: space-between; padding: 0 7px 0 8px; }
.tabs { height: 41px; margin: 0 5px; border-bottom: 3px solid #3e79b8; display: flex; align-items: flex-end; padding-left: 11px; }
.mtab { width: 111px; height: 24px; background: #0b4e82; border-radius: 2px 2px 0 0; color: #fff; display: flex; align-items: center; padding-left: 9px; }
.mtab svg { width: 8px; height: 8px; margin: -8px 0 0 11px; }
.work { margin: 4px 0 0 6px; display: flex; gap: 8px; height: 722px; }
.panel { width: 1620px; }
.strip { width: 37px; background: #f4f4f4; border-radius: 3px; display: flex; flex-direction: column; align-items: center; padding-top: 11px; }
.strip svg { width: 16px; height: 16px; }
.strip span { writing-mode: vertical-rl; text-orientation: sideways; font-size: 11.500px; color: #1482d2; }
.strip > span { margin-top: 7px; }
.gbar { height: 32px; background: #f4f4f4; border-radius: 12px 0 0 0; display: flex; align-items: center; gap: 8px; padding: 0 14px 0 10px; }
.btn { height: 24px; border: 1px solid #d5d5d5; border-radius: 3px; display: flex; align-items: center; color: #777; white-space: nowrap; }
.b1 { width: 58px; padding-left: 3px; gap: 6px; }
.b2 { width: 98px; padding-left: 4px; gap: 4px; }
.btn svg { width: 16px; height: 14px; }
.bl { color: #3f97d3; }
.combo { width: 90px; height: 25px; border: 1px solid #7792ad; background: #fff; display: flex; align-items: center; justify-content: space-between; padding-left: 7px; color: #777; }
.combo i { width: 22px; height: 23px; background: #ededed; display: flex; align-items: center; justify-content: center; }
.combo svg { width: 10px; height: 10px; }
.sort { width: 24px; justify-content: center; background: #ececec; }
.btn.sort svg { width: 16px; height: 18px; }
.copy { width: 74px; padding-left: 8px; justify-content: space-between; padding-right: 7px; }
.btn.copy svg { width: 10px; height: 10px; }
.view { width: 58px; margin-left: 10px; padding-left: 4px; gap: 5px; }
.filters { height: 33px; background: #12305e; display: flex; align-items: center; gap: 18px; padding-left: 10px; }
.filters > span { width: 130px; height: 25px; background: #d4e7f6; border: 1px solid #7f97b0; display: flex; align-items: center; justify-content: space-between; padding-left: 6px; color: #6d7680; }
.filters i { width: 22px; height: 23px; background: radial-gradient(circle at 50% 50%, transparent 7.500px, #999 8px, #999 9px, transparent 9.500px), linear-gradient(45deg, transparent 48%, #888 49% 52%, transparent 53%) center/9px 9px no-repeat, linear-gradient(-45deg, transparent 48%, #888 49% 52%, transparent 53%) center/9px 9px no-repeat, #ededed; }
.ghead { height: 32px; margin-bottom: 2px; background: #8191a4; border-top: 2px solid #6d7f93; display: flex; color: #fff; }
.ghead > span { height: 30px; background: #949fad; border-right: 1px solid #6f8094; display: flex; align-items: center; justify-content: center; }
.ghead .c1 { background: #8293a7; position: relative; }
.asc { position: absolute; left: 8px; top: 7px; width: 108px; height: 16px; }
.ghead .c1 b { position: relative; padding-right: 14px; }
.ghead .c4 { border-right: 0; padding-right: 12px; }
.c0 { width: 24px; } .c1 { width: 120px; } .c2 { width: 220px; } .c3 { width: 220px; } .c4 { width: 100px; }
.cb { width: 13px; height: 13px; background: #fff; border: 1px solid #a5a5a5; flex: none; }
.gbody { height: 554px; overflow: hidden; display: flex; justify-content: space-between; background: #fff; border-left: 1px solid #e6e6e6; margin-right: 1px; }
.rows { width: 684px; }
.row { height: 26px; display: flex; border-bottom: 1px solid #cfcfcf; align-items: center; line-height: 20px; color: #333; }
.row span { white-space: nowrap; }
.row > span { height: 25px; padding: 0 0 2px 7px; display: flex; align-items: center; }
.row > .c0 { padding: 0 0 5px 6px; border-right: 1px solid #cfcfcf; width: 23px; }
.row > .c3 { word-spacing: .6px; }
.row > .c4 { justify-content: flex-end; padding-right: 6px; }
.row:nth-child(even) { background: #fafafa; }
.row.sel { background: #c2dcf1; border-color: #c2dcf1; }
.row.sel .c3 { border: 1px solid #3a8fd0; padding-left: 6px; padding-bottom: 0; }
.row.sel .cb { background: linear-gradient(125deg, transparent 48%, #777 50% 56%, transparent 58%), #fff; }
.vscroll { width: 17px; background: #f1f1f1; display: flex; flex-direction: column; align-items: center; }
.vscroll b { width: 13px; height: 232px; background: #c1c1c1; }
.vscroll .up { border: 4px solid transparent; border-bottom-color: #888; margin: 3px 0 5px; }
.vscroll .dn { border: 4px solid transparent; border-top-color: #444; margin: auto 0 3px; }
.pager { height: 34px; background: #f4f4f4; border-top: 1px solid #cfcfcf; display: flex; align-items: center; color: #555; padding: 0 18px 0 13px; }
.pager svg { height: 16px; color: #aaa; }
.p1 { width: 16px; } .p2 { width: 10px; margin-left: 18px; } .p3 { width: 10px; } .p4 { width: 16px; margin-left: 18px; } .p5 { width: 16px; }
.pager .dash { margin: 0 12px 0 16px; }
.pager .p4 + .dash { margin: 0 12px; }
.pager .of + .dash { margin: 0 0 0 12px; }
.num { width: 40px; height: 25px; margin-left: 15px; background: #fff; border: 1px solid #7792ad; text-align: right; padding: 3px 6px; color: #333; }
.of { margin-left: 6px; width: 15px; white-space: nowrap; }
.pager .of + .dash + .p3 { margin-left: 15px; }
.status { height: 32px; margin-top: 3px; background: #f4f4f4; display: flex; align-items: center; padding: 0 14px 0 13px; color: #444; }
.excel { width: 60px; padding-left: 5px; gap: 6px; }
.btn.excel svg { width: 13px; height: 16px; }

/* ---- task bar ---- */
.taskbar { font-size: 10px; height: 4em; background: #1e1d1d; display: flex; align-items: stretch; margin-top: auto; flex: none; color: #fff; }
.taskbar.large { font-size: 12.5px; }
.task { width: 4.91em; display: flex; align-items: center; justify-content: center; position: relative; }
.large .task { width: 4.95em; }
.task svg { width: 2.4em; height: 2.4em; }
.task.run::after { content: ""; position: absolute; left: .45em; right: .45em; bottom: 0; height: .2em; background: #f5919b; }
.task.active { background: #4a4a4a; }
.task.active::after { left: 0; right: 0; }
.task.more::after { background: linear-gradient(90deg, #f5919b 80%, #b06a72 80%); }
.tray { margin-left: auto; display: flex; align-items: center; gap: .8em; }
.tray svg { width: 1.6em; height: 1.6em; }
.tray svg:first-child { width: 1.2em; }
.clock { display: flex; flex-direction: column; align-items: center; justify-content: center; width: 7.6em; margin-left: .6em; }
.clock span { font-size: 12px; line-height: 18px; }
.clock .ko { line-height: 1; font-size: 12.500px; }
.large .clock { margin-left: auto; width: 7.4em; }
.large .clock > span { font-size: 14.500px; line-height: 23px; }
.large .clock > span > span { font-size: 14.500px; }
.notif { width: 5.4em; display: flex; align-items: center; padding-left: 1.2em; border-right: 1px solid #4a4a4a; margin-right: .5em; }
.notif svg { width: 2.2em; height: 2.2em; }

/* ---- attachment viewer ---- */
.viewer { height: 901px; flex: none; display: flex; flex-direction: column; background: #262626; }
.vbar { height: 77px; flex: none; background: #303030; display: flex; align-items: center; color: #fff; box-shadow: 0 2px 4px #111; position: relative; padding-right: 40px; }
.vback { width: 22px; height: 20px; margin-left: 31px; }
.vx { width: 25px; height: 25px; margin-left: 32px; }
.vtitle { font-size: 19px; margin-left: 16px; }
.open { width: 370px; height: 44px; margin-left: 128px; background: #0c0c0c; border-radius: 3px; display: flex; align-items: center; padding-left: 7px; font-size: 17.500px; }
.gs { width: 33px; height: 33px; margin-right: 10px; }
.open i { width: 1px; height: 33px; background: #666; margin-left: 18px; }
.open b { border: 7px solid transparent; border-top: 8px solid #fff; border-bottom: 0; margin-left: 9px; }
.va { width: 28px; height: 25px; margin-left: 38px; }
.vm { width: 6px; height: 22px; margin-left: 49px; }
.vmain { height: 772px; display: flex; overflow: hidden; }
.sheet { width: 1330px; flex: none; display: flex; flex-direction: column; }
.shead { height: 32px; flex: none; display: flex; background: #303030; color: #a2a2a2; font: 16px "Liberation Sans", sans-serif; }
.shead span { display: flex; flex: none; align-items: center; justify-content: center; border-right: 1px solid #555; border-bottom: 1px solid #555; }
.sclip { height: 740px; overflow: hidden; }
.sbody { margin-top: -25.700px; font: 14px/1.2 "Noto Sans", "Noto Sans CJK KR", sans-serif; color: #111; }
.srow { height: 41.250px; display: flex; width: 1329px; background: #fff; }
.srow > span { display: flex; flex: none; align-items: center; border-right: 1.500px solid #222; border-bottom: 2px solid #222; padding-left: 8px; white-space: pre; word-spacing: -1.500px; }
.srow .num-h { background: #303030; border-color: #555; border-right-color: #444; color: #9c9c9c; justify-content: center; padding: 0 0 1px; font: 16px "Liberation Sans", sans-serif; }
.srow .mid { justify-content: center; padding: 0; }
.srow .qty { font-weight: 700; border-right: 3px solid #111; }
.srow .ko { color: #333; }
.w0 { width: 63px; } .w1 { width: 43.800px; } .w2 { width: 140.200px; } .w3 { width: 130.600px; } .w4 { width: 53.800px; } .w5 { width: 53.600px; }
.dim { width: 513px; border-right: 1px solid #222; color: #0f0f0f; }
.inbox { height: 78px; margin-right: 23px; border-bottom: 1px solid #222; display: flex; align-items: center; padding: 8px 0 0 216px; font-size: 14.500px; }
.ia, .ib { width: 10px; height: 12px; }
.ia { margin-left: 37px; } .ib { margin-left: 46px; }
.gear { width: 22px; height: 22px; margin-left: 39px; }
.dscroll { width: 15px; height: 419px; margin: 188px 0 0 auto; background: #1c1c1c; }
.rail { width: 60px; display: flex; flex-direction: column; align-items: center; padding: 39px 0 0 20px; color: #101010; }
.r1 { width: 22px; height: 22px; } .r2 { width: 22px; height: 22px; margin-top: 55px; } .r3 { width: 26px; height: 26px; margin-top: 52px; }
.rail i { width: 28px; height: 1px; background: #202020; margin-top: 47px; }
.r4 { width: 18px; height: 18px; margin-top: 53px; }
.rscroll { width: 17px; padding: 223px 1px 0 0; }
.rscroll b { display: block; height: 225px; background: #4c4c4c; }
.stabs { height: 52px; background: #000; display: flex; gap: 5px; padding: 2px 0 0 63px; font-size: 15px; color: #8c8c8c; }
.stabs > span { width: 162px; height: 44px; background: #222; border-radius: 0 0 4px 4px; display: flex; align-items: center; justify-content: center; }
.stabs > .on { background: #494949; color: #fff; }
```

FILE: app.js
```js
const icon = (id, cls = "") => `<svg class="${cls}"><use href="#${id}"/></svg>`;

/* bookmarks: icon, label, label width */
const bookmarks = [
  ["globe", "쿠팡! - 로켓배송", 89], ["gmail", "Gmail", 31], ["papago", "Papago", 41],
  ["book", "Lua Ngx API - Ope...", 113], ["atom", "P3X Redis UI | App...", 113],
  ["globe", "192.168.10.245", 80], ["streams", "STREAMS Introduc...", 111], ["redis", "XREAD – Redis", 81]
];
document.querySelectorAll("[data-bookmarks]").forEach(el => {
  const list = el.dataset.bookmarks === "apps" ? [["apps", "앱", 12], ...bookmarks] : bookmarks;
  el.innerHTML = list.map(([i, t, w]) => `<span>${icon(i)}<span data-w="${w}">${t}</span></span>`).join("");
});

/* task bar buttons */
const tasks = [["win", ""], ["view", ""], ["chrome", "run active"], ["explorer", "run more"], ["putty", "run more"],
  ["tele", ""], ["ever", ""], ["g", ""], ["spring", "run"], ["code", ""], ["android", "run"], ["hs", ""],
  ["ie", "run"], ["lock", "run more"], ["badge", "run"], ["n", "run"], ["note", "run"], ["talk", "run"]];
document.querySelectorAll("[data-taskbar]").forEach(el =>
  el.insertAdjacentHTML("afterbegin", tasks.map(([i, c]) => `<div class="task ${c}">${icon("t-" + i)}</div>`).join("")));

/* menu tree */
const tree = [["chart", "실시간종합"], ["open", "영업관리"], "제품관리(조립)", "제품관리(성형)", "수주등록",
  ["open", "자재관리"], "자재등록관리", "자재엑셀업로드", "자재분류코드", "BOM구성",
  ["open", "생산관리"], "생산계획수립", "생산실행현황", "출하예정등록", "출하확인", "출하완료현황",
  ["open", "재고관리"], "자재재고현황", "생산제품현황", "제품재고합계", "기타재고현황", "Rack관리",
  ["shut", "품질관리"], ["shut", "설비관리"], ["shut", "기준정보"]];
document.getElementById("tree").innerHTML = tree.map(n => {
  if (typeof n === "string") return `<li class="leaf${n === "제품재고합계" ? " sel" : ""}">${icon("doc", "dc")}${n}</li>`;
  const [kind, label] = n;
  const arrow = kind === "chart" ? `<i class="arr"></i>` : icon(kind === "open" ? "chev-d" : "chev-r", "arr");
  return `<li>${arrow}${icon({ chart: "chart", open: "folder-o", shut: "folder" }[kind], "fo")}${label}</li>`;
}).join("");

/* stock list: code, name, spec, quantity */
const stock = [
  ["PC-01000-WH", "C 형 - 내피", "백색 / 1,000L", 7], ["PC-11000-WH", "KC 형 - 내피", "백색 / 1,000L", 10],
  ["PD-01000-WH", "D 형 - 내피", "백색 / 1,000L", 87], ["PD-11000-WH", "KD 형 - 내피", "백색 / 1,000L", 92],
  ["PE-01000-WH", "E형(D스크류) - 내피", "백색 / 1,000L", 2], ["PH-01000-WH", "H형(P4) - 내피", "백색 / 1,200L", 1],
  ["UC-01000-WH", "UC - 1000", "백색 / 1,000L", 2], ["UC-03000-YE", "UC - 3000", "황색 / 3,000L", 1],
  ["UC-05000-YE", "UC - 5000", "황색 / 5,000L", 2], ["UC-10000-YE", "UC - 10000", "황색 / 10,000L", 1],
  ["UG-00200-WH", "UG - 200", "백색 / 200L", 17], ["UG-00200-YE", "UG - 200", "황색 / 200L", 9],
  ["UG-00400-BL", "UG - 400", "흑색 / 400L", 1], ["UG-00400-WH", "UG - 400", "백색 / 400L", 9],
  ["UG-00400-YE", "UG - 400", "황색 / 400L", 13], ["UG-00600-WH", "UG - 600", "백색 / 600L", 17],
  ["UG-00600-YE", "UG - 600", "황색 / 600L", 7], ["UG-00800-BL", "UG - 800", "흑색 / 800L", 1],
  ["UG-00800-WH", "UG - 800", "백색 / 800L", 10], ["UG-01000-YE", "UG - 1000S", "황색 / 1,000L", 4],
  ["UG-01001-YE", "UG - 1000C", "황색 / 1,000L", 20], ["UG-01500-WH", "UG - 1500", "백색 / 1,500L", 3]
];
document.getElementById("rows").innerHTML = stock.map(r =>
  `<div class="row${r[0] === "UG-00800-BL" ? " sel" : ""}"><span class="c0"><b class="cb"></b></span>` +
  r.map((v, i) => `<span class="c${i + 1}"><span>${v}</span></span>`).join("") + `</div>`).join("");

/* spreadsheet: three blocks of code / name / colour / quantity */
const W = "백색", Y = "황색", B = "흑색";
const left = [["", "", "내피 속뚜껑", W, ""], ["013", "PD-41000-WH", "내피D 속뚜껑", W, ""],
  ["014", "UG-00200-YE", "UG - 200L", Y, 9], ["015", "UG-00200-WH", "UG - 200L", W, 17], ["016", "UG-00200-BL", "UG - 200L", B, ""],
  ["017", "UG-00400-YE", "UG - 400L", Y, 13], ["018", "UG-00400-WH", "UG - 400L", W, 9], ["019", "UG-00400-BL", "UG - 400L", B, 1],
  ["020", "UG-00600-YE", "UG - 600L", Y, 7], ["021", "UG-00600-WH", "UG - 600L", W, 17], ["022", "UG-00600-BL", "UG - 600L", B, ""],
  ["023", "UG-00800-YE", "UG - 800L", Y, ""], ["024", "UG-00800-WH", "UG - 800L", W, 10], ["025", "UG-00800-BL", "UG - 800L", B, 1],
  ["026", "UG-01000-YE", "UG - 1000L-S", Y, 4], ["027", "UG-01000-WH", "UG - 1000L-S", W, ""], ["028", "UG-01000-BL", "UG - 1000L-S", B, ""],
  ["029", "UG-01001-YE", "UG - 1000L-C", Y, 20], ["030", "UG-01001-WH", "UG - 1000L-C", W, ""]];
const mid = [["", "", "", W, ""], ["058", "UG-15000-BL", "UG - 15000L", B, ""],
  ["059", "UG-20000-YE", "UG - 20000L", Y, 1], ["060", "UG-20000-WH", "UG - 20000L", W, ""], ["061", "UG-20000-BL", "UG - 20000L", B, ""],
  ["062", "UG-30000-YE", "UG - 30000L", Y, ""], ["063", "UG-30000-WH", "UG - 30000L", W, ""], ["064", "UG-30000-BL", "UG - 30000L", B, 3],
  ["065", "UG-40000-YE", "UG - 40000L", Y, 1], ["066", "UG-40000-WH", "UG - 40000L", W, ""], ["067", "UG-40000-BL", "UG - 40000L", B, ""],
  ["068", "UG-50000-YE", "UG - 50000L", Y, 2], ["069", "UG-50000-WH", "UG - 50000L", W, ""], ["070", "UG-50000-BL", "UG - 50000L", B, ""],
  ["071", "UC-00200-YE", "UC - 200L", Y, ""], ["072", "UC-00200-WH", "UC - 200L", W, ""], ["073", "UC-00200-BL", "UC - 200L", B, ""],
  ["074", "UC-00500-YE", "UC - 500L", Y, ""], ["075", "UC-00500-WH", "UC - 500L", W, ""]];
const right = [["", "", "", W, ""], ["103", "MH-05000-BL", "맨홀뚜껑 ~5천L", B, ""],
  ["104", "MH-50000-YE", "맨홀뚜껑 ~5만L", Y, ""], ["105", "MH-50000-WH", "맨홀뚜껑 ~5만L", W, ""], ["106", "MH-50000-BL", "맨홀뚜껑 ~5만L", B, ""],
  ["107", "MH-00300-BL", "MH-300뚜껑", "검정", ""], ["108", "MH-00301-BL", "MS-300H뚜껑", "검정", ""], ["109", "MH-00601-BL", "MS-600H뚜껑", "검정", ""],
  ["110", "MH-00200-SB", "미우라200L뚜껑", "연청", ""], ["111", "JS-00200-WH", "주성UG-200L", W, ""], ["112", "JS-00400-WH", "주성UG-400L", W, ""],
  ["113", "JS-00600-WH", "주성UG-600L", W, ""], ["114", "JS-00800-WH", "주성UG-800L", W, ""], ["115", "JS-01000-WH", "주성UG-1000L-S", W, ""],
  ["116", "JS-01001-WH", "주성UG-1000L-C", W, ""], ["117", "JS-01500-WH", "주성UG-1500", W, ""], ["118", "JS-02000-WH", "주성UG-2000L", W, ""],
  ["119", "JS-03000-WH", "주성UG-3000L", W, ""], ["120", "JS-04000-WH", "주성UG-4000L", W, ""]];
document.getElementById("shead").innerHTML = `<span class="w0"></span>` +
  [..."ABCDEFGHIJKLMNO"].map((c, i) => `<span class="w${i % 5 + 1}">${c}</span>`).join("");
document.getElementById("sbody").innerHTML = left.map((l, i) => {
  const cells = [...l, ...mid[i], ...right[i]].map((v, c) => {
    const k = c % 5;
    const centred = k === 0 || k === 3 || k === 4 || (c === 12 && i >= 15);
    const fit = c === 12 && (i === 13 || i === 14) ? ` data-w="92"` : "";
    return `<span class="w${k + 1}${centred ? " mid" : ""}${k === 4 ? " qty" : ""}"><span${fit}>${v}</span></span>`;
  }).join("");
  return `<div class="srow"><span class="w0 num-h">${17 + i}</span>${cells}</div>`;
}).join("");

/* Hangul runs are set slightly larger than the Latin text beside them */
const walker = document.createTreeWalker(document.querySelector(".desktop"), NodeFilter.SHOW_TEXT);
const nodes = [];
while (walker.nextNode()) if (/[가-힣]/.test(walker.currentNode.data)) nodes.push(walker.currentNode);
nodes.forEach(n => {
  const s = document.createElement("span");
  s.innerHTML = n.data.replace(/&/g, "&amp;").replace(/[가-힣]+/g, m => `<span class="ko">${m}</span>`);
  s.style.whiteSpace = "pre";
  n.replaceWith(s);
});

/* track labels to their nominal widths */
document.querySelectorAll("[data-w]").forEach(el => {
  const target = el.dataset.w * (el.closest(".browser.large") ? 1.25 : 1);
  const gap = (target - el.getBoundingClientRect().width) / el.textContent.length;
  el.style.letterSpacing = gap.toFixed(3) + "px";
});
```
